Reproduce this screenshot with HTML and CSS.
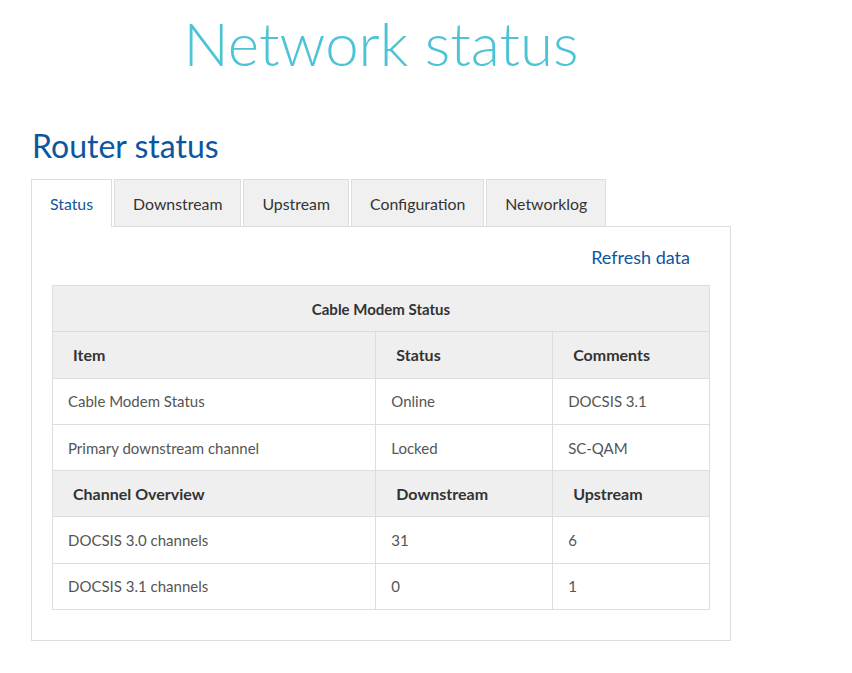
FILE: index.html
```html
<!DOCTYPE html>
<html>
<head>
<meta charset="utf-8">
<link rel="stylesheet" href="styles.css">
</head>
<body>
<div class="page">
  <h1 class="title">Network status</h1>
  <h2 class="subtitle">Router status</h2>
  <div class="tabs">
    <div class="tab active">Status</div>
    <div class="tab">Downstream</div>
    <div class="tab">Upstream</div>
    <div class="tab">Configuration</div>
    <div class="tab">Networklog</div>
  </div>
  <div class="panel">
    <div class="refresh"><a href="#">Refresh data</a></div>
    <table class="status">
      <colgroup><col class="c1"><col class="c2"><col class="c3"></colgroup>
      <tr><th colspan="3" class="caption">Cable Modem Status</th></tr>
      <tr><th>Item</th><th>Status</th><th>Comments</th></tr>
      <tr><td>Cable Modem Status</td><td>Online</td><td>DOCSIS 3.1</td></tr>
      <tr><td>Primary downstream channel</td><td>Locked</td><td>SC-QAM</td></tr>
      <tr><th>Channel Overview</th><th>Downstream</th><th>Upstream</th></tr>
      <tr><td>DOCSIS 3.0 channels</td><td>31</td><td>6</td></tr>
      <tr><td>DOCSIS 3.1 channels</td><td>0</td><td>1</td></tr>
    </table>
  </div>
</div>
</body>
</html>
```
FILE: styles.css
```css
* { box-sizing: border-box; }
body {
  margin: 0;
  font-family: Lato, "Open Sans", sans-serif;
  color: #555;
  background: #fff;
}
.page {
  width: 700px;
  margin-left: 31px;
}
.title {
  margin: 7px 0 0;
  text-align: center;
  font-weight: 300;
  font-size: 60px;
  line-height: 72px;
  color: #4dc3d6;
}
.subtitle {
  margin: 47px 0 0 1px;
  font-weight: 400;
  font-size: 32px;
  line-height: 40px;
  color: #0c56a0;
}
.tabs {
  display: flex;
  gap: 2px;
  margin-top: 13px;
  height: 47px;
}
.tab {
  height: 47px;
  padding: 0 18px;
  display: flex;
  align-items: center;
  font-size: 15.85px;
  color: #333;
  background: #f0f0f0;
  border: 1px solid #ddd;
  border-bottom: none;
}
.tab.active {
  background: #fff;
  color: #0c56a0;
  height: 48px;
  position: relative;
  z-index: 1;
}
.panel {
  border: 1px solid #ddd;
  padding: 16px 20px 30px 20px;
}
.refresh {
  text-align: right;
  padding-right: 20px;
  font-size: 18px;
  line-height: 28px;
}
.refresh a {
  color: #0c56a0;
  text-decoration: none;
}
.status {
  margin-top: 14px;
  width: 658px;
  border-collapse: collapse;
  font-size: 15px;
}
.c1 { width: 324px; }
.c2 { width: 177px; }
.c3 { width: 157px; }
.status th, .status td {
  border: 1px solid #ddd;
  height: 46.3px;
  text-align: left;
  vertical-align: middle;
}
.status th {
  background: #efefef;
  color: #333;
  font-weight: 700;
  font-size: 16px;
  padding: 0 20px;
}
.status th.caption {
  text-align: center;
  font-size: 15px;
}
.status td {
  padding: 0 15px;
  color: #555;
}
```
